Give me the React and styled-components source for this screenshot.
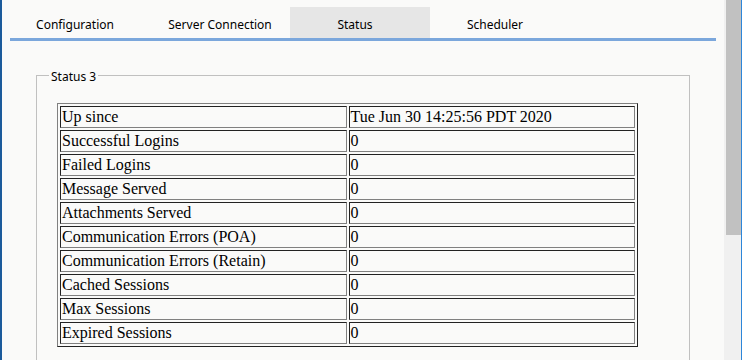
import React from "react";
import styled, { createGlobalStyle } from "styled-components";

const Global = createGlobalStyle`
  html, body {
    margin: 0;
    padding: 0;
    height: 100%;
    overflow: hidden;
    background: #fafaf9;
  }
  #root { height: 100%; }
`;

const Frame = styled.div`
  display: flex;
  height: 100vh;
  box-sizing: border-box;
  border-left: 2px solid #1b5a9b;
  border-right: 1px solid #2d86d9;
  overflow: hidden;
`;

const Main = styled.div`
  flex: 1;
  min-width: 0;
  padding: 7px 0 0 8px;
  font-family: "Noto Sans", Tahoma, sans-serif;
  font-size: 12px;
  color: #000;
`;

const TabBar = styled.div`
  display: flex;
  width: 706px;
  height: 31px;
  border-bottom: 3px solid #7ba7dc;
`;

const Tab = styled.div`
  width: 140px;
  display: flex;
  align-items: center;
  justify-content: center;
  padding: 3px ${(p) => p.$shift}px 0 0;
  box-sizing: border-box;
  background: ${(p) => (p.$active ? "#e6e6e6" : "transparent")};
  white-space: nowrap;
`;

const Group = styled.fieldset`
  margin: 26px 0 0 26px;
  width: 654px;
  box-sizing: border-box;
  border: 1px solid #c0c0c0;
  padding: 19px 12px 40px;
  min-inline-size: 0;
`;

const Legend = styled.legend`
  padding: 2px 2px 0;
  font-size: 12px;
  line-height: 15px;
`;

const StatsTable = styled.table`
  width: 581px;
  margin-left: 8px;
  border-collapse: separate;
  border-spacing: 2px;
  border: 1px solid;
  border-color: #808080 #222 #222 #808080;
  font-family: "Liberation Serif", "Times New Roman", serif;
  font-size: 16px;
`;

const Cell = styled.td`
  width: 50%;
  padding: 1px;
  height: 18px;
  line-height: 18px;
  border: 1px solid;
  border-color: #222 #808080 #808080 #222;
  white-space: nowrap;
`;

const Scrollbar = styled.div`
  width: 17px;
  flex: none;
  background: #f0f0f0;
`;

const Thumb = styled.div`
  margin-left: 2px;
  height: 235px;
  background: #c1c1c1;
`;

const tabs = [
  { label: "Configuration", shift: 10 },
  { label: "Server Connection", shift: 0 },
  { label: "Status", shift: 10, active: true },
  { label: "Scheduler", shift: 10 },
];

const rows = [
  ["Up since", "Tue Jun 30 14:25:56 PDT 2020"],
  ["Successful Logins", "0"],
  ["Failed Logins", "0"],
  ["Message Served", "0"],
  ["Attachments Served", "0"],
  ["Communication Errors (POA)", "0"],
  ["Communication Errors (Retain)", "0"],
  ["Cached Sessions", "0"],
  ["Max Sessions", "0"],
  ["Expired Sessions", "0"],
];

export default function App() {
  return (
    <>
      <Global />
      <Frame>
        <Main>
          <TabBar>
            {tabs.map((t) => (
              <Tab key={t.label} $active={t.active} $shift={t.shift}>
                {t.label}
              </Tab>
            ))}
          </TabBar>
          <Group>
            <Legend>Status 3</Legend>
            <StatsTable>
              <tbody>
                {rows.map(([k, v]) => (
                  <tr key={k}>
                    <Cell>{k}</Cell>
                    <Cell>{v}</Cell>
                  </tr>
                ))}
              </tbody>
            </StatsTable>
          </Group>
        </Main>
        <Scrollbar>
          <Thumb />
        </Scrollbar>
      </Frame>
    </>
  );
}
